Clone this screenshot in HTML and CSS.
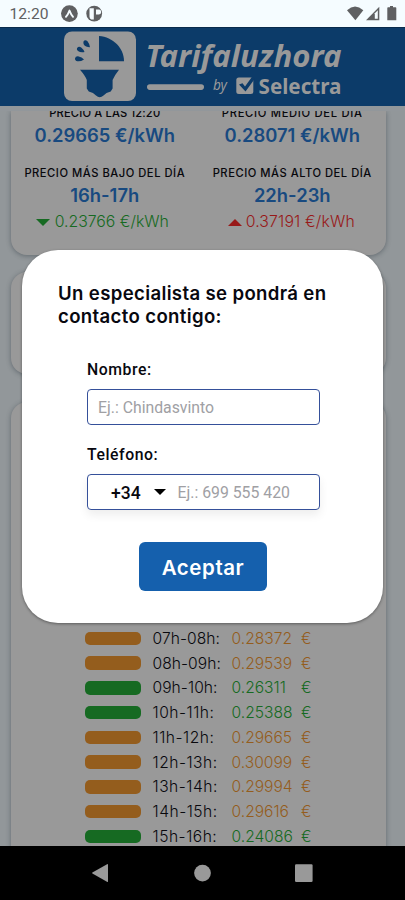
FILE: index.html
```
<!DOCTYPE html>
<html lang="es">
<head>
<meta charset="utf-8">
<title>Tarifaluzhora</title>
<link rel="stylesheet" href="styles.css">
</head>
<body>
<div class="phone">
  <div class="status">
    <svg width="405" height="27" viewBox="0 0 405 27">
      <text class="clock" x="9.5" y="19.3" textLength="39" lengthAdjust="spacingAndGlyphs">12:20</text>
      <circle cx="69.4" cy="13.6" r="8.4" fill="#5f6062"/>
      <path d="M66 16.8Q67.6 15.4 69.5 10.6Q71.4 15.4 73 16.8" fill="none" stroke="#f5fcff" stroke-width="1.9" stroke-linecap="round" stroke-linejoin="round"/>
      <circle cx="94.2" cy="13.6" r="7.9" fill="#5f6062"/>
      <path d="M89.5 8.2h4.3v11.3h-2.4q-1.9-.8-1.9-2.8zM96 9.4h3.2q2 .4 2 2.5T99 14.6h-3z" fill="#f5fcff"/>
      <path d="M347 10.2Q355 2.9 363.3 10.2L355.4 20.2z" fill="#5f6062"/>
      <path d="M379.3 6.8V20.2H366z" fill="#5f6062"/>
      <path d="M374.8 13.2l3-3v8.6h-3z" fill="#f5fcff"/>
      <path d="M390 6h3v1.3h2.5q.8 0 .8.8V20.2h-9V8.1q0-.8.8-.8h1.9z" fill="#5f6062"/>
    </svg>
  </div>
  <header class="header">
    <svg width="405" height="78" viewBox="0 28 405 78">
      <rect x="64" y="31.5" width="72" height="69.5" rx="8" fill="#999"/>
      <g fill="#0c3b69">
        <path d="M99 36C113 37 124 48 124 61.3H99z"/>
        <path d="M80 69.8H119Q114.5 75.5 112.6 80V88.5L110.7 91.4Q106 92.5 103.5 95.5Q99.7 98.8 96 95.5Q93.5 92.5 88.8 91.4L86.8 88.5V80Q85 75.5 80 69.8z"/>
        <path d="M83.5 41.5Q85 39 87.5 41.2Q89.8 44 90 47.3Q85.5 47 83.8 44.4Q83.1 43 83.5 41.5zM77 48.2Q78.6 45.8 81.2 47.5Q84 49.8 84.5 52.1Q80.5 52.9 78 51Q76.4 49.9 77 48.2zM75 58.6Q75.4 56 78 56.2Q82.2 57 84 59.5Q80.6 61.7 77.5 61.3Q74.8 60.9 75 58.6z"/>
      </g>
      <text class="brand" x="145.5" y="67" textLength="196" lengthAdjust="spacingAndGlyphs">Tarifaluzhora</text>
      <rect x="147" y="84.3" width="57" height="5.6" rx="2.8" fill="#999"/>
      <text class="by" x="213" y="90" textLength="14" lengthAdjust="spacingAndGlyphs">by</text>
      <rect x="236.3" y="77.5" width="17" height="16.5" rx="2.5" fill="#999"/>
      <path d="M239 84.5L242.5 83.2L245 86.5L251.5 77.5L255 78.5L245.5 91.5z" fill="#0c3b69"/>
      <text class="selectra" x="258.5" y="93.6" textLength="83" lengthAdjust="spacingAndGlyphs">Selectra</text>
    </svg>
  </header>
  <main class="content">
    <section class="card prices">
      <div class="cell now"><h3 class="label l1">PRECIO A LAS 12:20</h3><p class="value">0.29665 €/kWh</p></div>
      <div class="cell now"><h3 class="label l2">PRECIO MEDIO DEL DÍA</h3><p class="value">0.28071 €/kWh</p></div>
      <div class="cell"><h3 class="label l3">PRECIO MÁS BAJO DEL DÍA</h3><p class="value">16h-17h</p><p class="sub green"><i class="tri down"></i>0.23766 €/kWh</p></div>
      <div class="cell"><h3 class="label l4">PRECIO MÁS ALTO DEL DÍA</h3><p class="value">22h-23h</p><p class="sub red"><i class="tri up"></i>0.37191 €/kWh</p></div>
    </section>
    <section class="card middle"></section>
    <section class="card hours">
      <div class="row orange"><i class="bar"></i><span class="hour">07h-08h:</span><span class="price">0.28372</span><span>€</span></div>
      <div class="row orange"><i class="bar"></i><span class="hour">08h-09h:</span><span class="price">0.29539</span><span>€</span></div>
      <div class="row green"><i class="bar"></i><span class="hour">09h-10h:</span><span class="price">0.26311</span><span>€</span></div>
      <div class="row green"><i class="bar"></i><span class="hour wide">10h-11h:</span><span class="price">0.25388</span><span>€</span></div>
      <div class="row orange"><i class="bar"></i><span class="hour wide">11h-12h:</span><span class="price">0.29665</span><span>€</span></div>
      <div class="row orange"><i class="bar"></i><span class="hour wide">12h-13h:</span><span class="price">0.30099</span><span>€</span></div>
      <div class="row orange"><i class="bar"></i><span class="hour wide">13h-14h:</span><span class="price">0.29994</span><span>€</span></div>
      <div class="row orange"><i class="bar"></i><span class="hour wide">14h-15h:</span><span class="price">0.29616</span><span>€</span></div>
      <div class="row green"><i class="bar"></i><span class="hour wide">15h-16h:</span><span class="price">0.24086</span><span>€</span></div>
    </section>
  </main>
  <nav class="nav">
    <svg width="405" height="54" viewBox="0 846 405 54" fill="#999">
      <path d="M107.5 864Q108 864 108 864.6V881.6Q108 882.2 107.4 882L92.4 873.6Q91.8 873.1 92.4 872.6z"/>
      <circle cx="202.5" cy="873.1" r="8.4"/>
      <rect x="295" y="864.3" width="17.6" height="17.6" rx="1.2"/>
    </svg>
  </nav>
  <div class="modal">
    <h2 class="title">Un especialista se pondrá en contacto contigo:</h2>
    <div class="form">
      <label class="field">Nombre:</label>
      <div class="box"><span class="hint name">Ej.: Chindasvinto</span></div>
      <label class="field">Teléfono:</label>
      <div class="box phonebox"><span class="prefix">+34</span><i class="caret"></i><span class="hint tel">Ej.: 699 555 420</span></div>
    </div>
    <button class="accept">Aceptar</button>
  </div>
</div>
</body>
</html>
```
FILE: styles.css
```
* { box-sizing: border-box; margin: 0; padding: 0; }
body { background: #000; font-family: Inter, sans-serif; }
svg { display: block; }
.phone { position: relative; width: 405px; height: 900px; overflow: hidden; display: flex; flex-direction: column; }
.status { height: 27px; background: #f5fcff; flex: none; }
.clock { font: 15.5px Roboto, sans-serif; fill: #5f6062; }
.header { height: 79px; background: #0c3b69; flex: none; border-top: 1px solid #092b4c; }
.brand { font: italic bold 30.5px "Noto Sans", sans-serif; fill: #999; }
.by { font: italic 14px "Noto Sans", sans-serif; fill: #999; }
.selectra { font: bold 21.5px "Noto Sans", sans-serif; fill: #999; }
.content { width: 405px; height: 740px; border-top: 5px solid #92979b; background: #92979a; padding: 0 19px 0 11px; overflow: hidden; flex: none; }
.card { background: #999; border-radius: 16px; box-shadow: 0 1px 5px rgba(40, 50, 60, .45); }
.prices { height: 144px; border-radius: 0 0 16px 16px; display: grid; grid-template-columns: 187.5px 187.5px; grid-template-rows: 54px 90px; text-align: center; }
.now { margin-top: -5px; }
.label { font-weight: 500; font-size: 11.2px; line-height: 15px; color: #08080d; white-space: nowrap; }
.l1 { letter-spacing: .15px; }
.l2 { letter-spacing: .7px; }
.l3, .l4 { letter-spacing: .52px; }
.cell:not(.now) .label { padding-top: 1px; }
.value { color: #184a80; font-weight: 600; font-size: 18.4px; line-height: 24px; margin-top: 2px; }
.sub { font-weight: 300; font-size: 15.8px; line-height: 22px; margin-top: 4px; padding-right: 5px; display: flex; align-items: center; justify-content: center; gap: 5px; }
.sub.red { padding-right: 2px; letter-spacing: .15px; gap: 4px; }
.green { color: #166a22; }
.red { color: #981818; }
.orange { color: #945d1d; }
.tri { border: 7.5px solid transparent; }
.down { border-top-color: #166a22; border-bottom: 0; }
.up { border-bottom-color: #981818; border-top: 0; }
.middle { height: 102px; margin-top: 17px; }
.hours { height: 600px; margin-top: 27.5px; padding: 225px 0 0 74px; }
.row { height: 24.75px; display: grid; grid-template-columns: 67.5px 79px 69.5px auto; align-items: center; font-size: 15.6px; font-weight: 300; line-height: 20px; }
.bar { width: 56px; height: 13.5px; margin-top: -1px; border-radius: 5px; background: currentColor; }
.hour { color: #08080d; letter-spacing: .05px; }
.wide { letter-spacing: .5px; }
.nav { height: 54px; background: #000; flex: none; }
.modal { position: absolute; left: 22px; top: 250px; width: 361px; height: 373px; background: #fff; border-radius: 36px; padding: 32px 34px 0 36px; box-shadow: 0 1px 3px rgba(0, 0, 0, .4); }
.title { font-size: 18.6px; font-weight: 600; line-height: 23px; letter-spacing: .35px; color: #08080f; }
.form { width: 233px; margin: 32px 0 0 29px; }
.field { display: block; font: 500 15.8px/20px Roboto, sans-serif; letter-spacing: .55px; color: #08080f; height: 29px; }
.box { height: 36px; border: 1px solid #35509a; border-radius: 4px; background: #fff; display: flex; align-items: center; margin-bottom: 20px; padding-left: 10px; }
.hint { font: 15.8px/20px Roboto, sans-serif; color: #a0a0a4; white-space: nowrap; padding-top: 1px; }
.phonebox { box-shadow: 0 5px 10px rgba(0, 0, 0, .07); padding-left: 23px; }
.prefix { font: 500 17.5px/20px Roboto, sans-serif; color: #08080f; width: 43px; padding-top: 1px; }
.caret { border: 6px solid transparent; border-top-color: #000; border-bottom: 0; margin-right: 11.5px; }
.accept { display: block; width: 128px; height: 49px; margin: 32px 0 0 81px; border: 0; border-radius: 6px; background: #1560ad; color: #fff; font: 600 20.5px Inter, sans-serif; letter-spacing: .55px; padding-top: 1px; }
```
